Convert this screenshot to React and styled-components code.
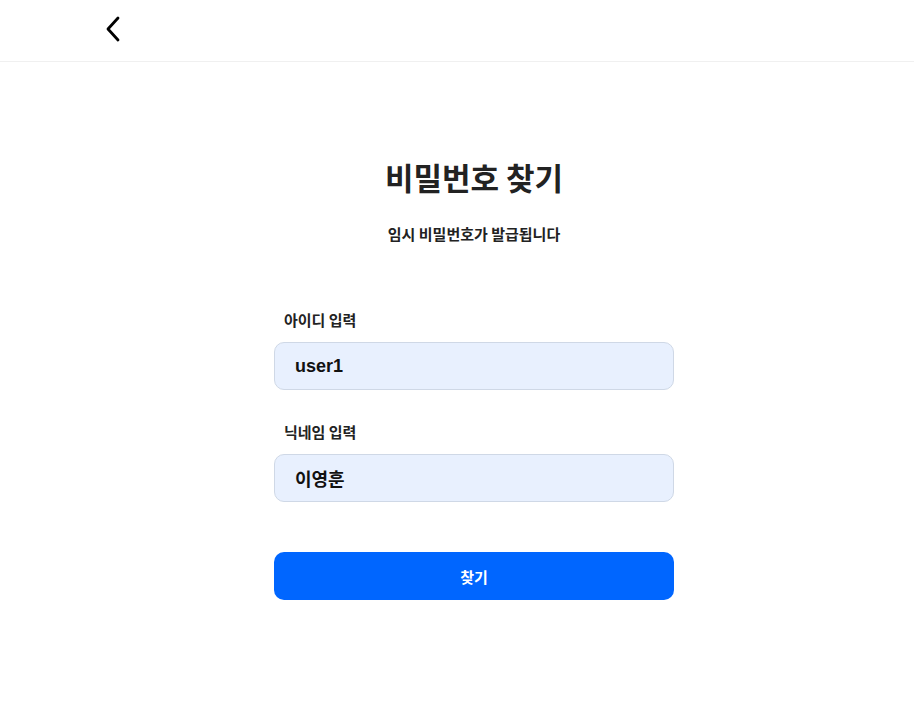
import React from 'react';
import styled, { createGlobalStyle } from 'styled-components';

const GlobalStyle = createGlobalStyle`
  body {
    margin: 0;
    background: #fff;
    font-family: "Noto Sans CJK KR", "Noto Sans", sans-serif;
    color: #222;
  }
`;

const Header = styled.header`
  height: 61px;
  border-bottom: 1px solid #f0f0f0;
  display: flex;
  align-items: center;
  padding-left: 100px;
`;

const BackButton = styled.button`
  border: none;
  background: none;
  padding: 0;
  width: 26px;
  height: 30px;
  display: flex;
  align-items: center;
  justify-content: center;
  cursor: pointer;
  margin-top: -4px;
`;

const Main = styled.main`
  display: flex;
  flex-direction: column;
  align-items: center;
  padding-top: 94px;
  padding-left: 34px;
`;

const Title = styled.h1`
  margin: 0;
  font-size: 31px;
  font-weight: 700;
  line-height: 42px;
  color: #222;
`;

const Subtitle = styled.p`
  margin: 25px 0 0;
  font-size: 15px;
  font-weight: 700;
  line-height: 22px;
  color: #222;
`;

const Form = styled.form`
  width: 400px;
  margin-top: 64px;
  display: flex;
  flex-direction: column;
`;

const Field = styled.div`
  display: flex;
  flex-direction: column;
  margin-bottom: ${p => p.$last ? '50px' : '31px'};
`;

const Label = styled.label`
  font-size: 15px;
  font-weight: 700;
  line-height: 22px;
  padding-left: 10px;
  margin-bottom: 11px;
  color: #222;
`;

const Input = styled.input`
  box-sizing: border-box;
  width: 100%;
  height: 48px;
  border: 1px solid #cfd8e6;
  border-radius: 10px;
  background: #e8f0fe;
  padding: 0 20px;
  font-family: "Liberation Sans", "Noto Sans CJK KR", sans-serif;
  font-size: 18px;
  font-weight: 700;
  color: #111;
  outline: none;
`;

const Submit = styled.button`
  height: 48px;
  border: none;
  border-radius: 10px;
  background: #0066ff;
  color: #fff;
  font-family: "Noto Sans CJK KR", sans-serif;
  font-size: 15px;
  font-weight: 700;
  cursor: pointer;
`;

export default function App() {
  return (
    <>
      <GlobalStyle />
      <Header>
        <BackButton aria-label="뒤로">
          <svg width="18" height="26" viewBox="0 0 18 26" fill="none">
            <path d="M14 2 L4 13 L14 24" stroke="#000" strokeWidth="2.8" strokeLinecap="round" strokeLinejoin="round" />
          </svg>
        </BackButton>
      </Header>
      <Main>
        <Title>비밀번호 찾기</Title>
        <Subtitle>임시 비밀번호가 발급됩니다</Subtitle>
        <Form onSubmit={e => e.preventDefault()}>
          <Field>
            <Label>아이디 입력</Label>
            <Input defaultValue="user1" />
          </Field>
          <Field $last>
            <Label>닉네임 입력</Label>
            <Input defaultValue="이영훈" />
          </Field>
          <Submit type="submit">찾기</Submit>
        </Form>
      </Main>
    </>
  );
}
